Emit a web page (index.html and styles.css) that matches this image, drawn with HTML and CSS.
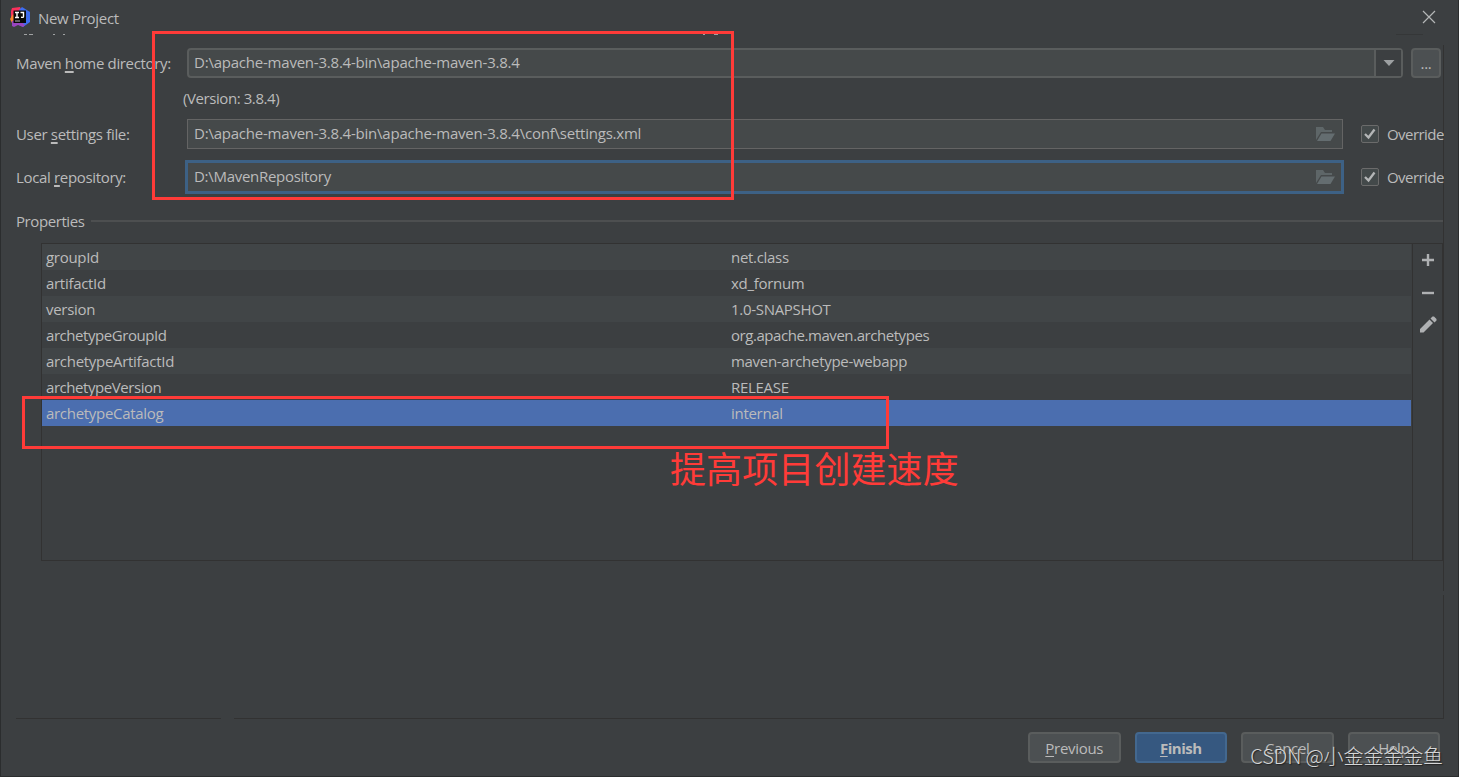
FILE: index.html
```html
<!DOCTYPE html>
<html lang="en">
<head>
  <meta charset="UTF-8">
  <title>New Project</title>
  <link rel="stylesheet" href="styles.css">
</head>
<body>
  <div class="dialog">
    <div class="titlebar">
      <svg class="logo" width="20" height="20" viewBox="0 0 20 20">
        <path d="M2 1l8-1 2 5-8 9-3-2V4z" fill="#f8315c"/>
        <path d="M0 12l3-5 3 6-4 3z" fill="#f9852c"/>
        <path d="M9 3l3-3 8 5v10l-7 5-4-2z" fill="#3d6df0"/>
        <path d="M2 14l6-2 7 6-2 2-5-2-4 2-2-1z" fill="#9a45c0"/>
        <rect x="3.500" y="3.500" width="12.500" height="12.500" fill="#080808"/>
        <path d="M5 5.500h4M7 5.500v5M5 10.500h4M10.500 5.500h3v4q0 1.200-2.500.800" stroke="#fff" stroke-width="1.400" fill="none"/>
        <path d="M5 14h5" stroke="#999" stroke-width="1.200"/>
      </svg>
      <span class="title">New Project</span>
      <svg class="close" width="14" height="14" viewBox="0 0 14 14"><path d="M1 1l12 12M13 1L1 13" stroke="#b4b6b7" stroke-width="1.200"/></svg>
    </div>

    <div class="content">
      <div class="form">
        <div class="row row-home">
          <label>Maven <u>h</u>ome directory:</label>
          <div class="combo">
            <span class="value">D:\apache-maven-3.8.4-bin\apache-maven-3.8.4</span>
            <span class="arrow"><svg width="12" height="8" viewBox="0 0 12 8"><path d="M0.500 1h11L6 7z" fill="#9da0a2"/></svg></span>
          </div>
          <button class="more">...</button>
        </div>
        <div class="version">(Version: 3.8.4)</div>
        <div class="row row-settings">
          <label>User <u>s</u>ettings file:</label>
          <div class="field">
            <span class="value">D:\apache-maven-3.8.4-bin\apache-maven-3.8.4\conf\settings.xml</span>
            <svg class="folder" width="20" height="16" viewBox="0 0 20 16"><path d="M0 1h7l2 3h7v2H5L0 14z" fill="#5e6668"/><path d="M5.500 7.500H19L14.500 15H1z" fill="#646d70"/></svg>
          </div>
          <span class="check"><svg width="18" height="18" viewBox="0 0 18 18"><path d="M4 9l3.500 3.500L13.500 4.500" stroke="#b4b6b7" stroke-width="2.300" fill="none"/></svg></span>
          <span class="override">Override</span>
        </div>
        <div class="row row-repo">
          <label>Local <u>r</u>epository:</label>
          <div class="field focused">
            <span class="value">D:\MavenRepository</span>
            <svg class="folder" width="20" height="16" viewBox="0 0 20 16"><path d="M0 1h7l2 3h7v2H5L0 14z" fill="#5e6668"/><path d="M5.500 7.500H19L14.500 15H1z" fill="#646d70"/></svg>
          </div>
          <span class="check"><svg width="18" height="18" viewBox="0 0 18 18"><path d="M4 9l3.500 3.500L13.500 4.500" stroke="#b4b6b7" stroke-width="2.300" fill="none"/></svg></span>
          <span class="override">Override</span>
        </div>
      </div>

      <div class="section"><span>Properties</span></div>

      <div class="properties">
        <div class="table">
          <div class="prop"><span>groupId</span><span>net.class</span></div>
          <div class="prop"><span>artifactId</span><span>xd_fornum</span></div>
          <div class="prop"><span>version</span><span>1.0-SNAPSHOT</span></div>
          <div class="prop"><span class="tight">archetypeGroupId</span><span class="tight">org.apache.maven.archetypes</span></div>
          <div class="prop"><span>archetypeArtifactId</span><span>maven-archetype-webapp</span></div>
          <div class="prop"><span class="tight">archetypeVersion</span><span>RELEASE</span></div>
          <div class="prop selected"><span>archetypeCatalog</span><span>internal</span></div>
        </div>
        <div class="tools">
          <svg width="18" height="18" viewBox="0 0 18 18"><path d="M9 3v12M3 9h12" stroke="#afb1b3" stroke-width="2.400"/></svg>
          <svg width="18" height="18" viewBox="0 0 18 18"><path d="M3 9h12" stroke="#afb1b3" stroke-width="2.400"/></svg>
          <svg width="18" height="18" viewBox="0 0 18 18"><path d="M1 13L10.500 3.500l3.500 3.500L4.500 16.500H1zM11.500 2.500L13.500 0.500h1.500L17.500 3v1.500l-2 2z" fill="#afb1b3"/></svg>
        </div>
      </div>
    </div>

    <div class="divider"><span></span><span></span></div>
    <div class="buttons">
      <button><u>P</u>revious</button>
      <button class="primary"><u>F</u>inish</button>
      <button>Cancel</button>
      <button>Help</button>
    </div>

    <!-- edges of the row scrolled under the title bar -->
    <svg class="scrolled" width="1443" height="3" viewBox="0 0 1443 3">
      <path d="M24 1.500h3M29 1.500h4M53 1.500h2M63 1.500h2M703 1.500h2M714 1.500h4" stroke="#a0a2a3"/>
      <path d="M1396 1.500h27" stroke="#353738"/>
    </svg>
    <div class="mark mark-paths"></div>
    <div class="mark mark-catalog"></div>
    <div class="note">提高项目创建速度</div>
    <div class="watermark">CSDN @小金金金金鱼</div>
  </div>
</body>
</html>
```

FILE: styles.css
```css
* {
  box-sizing: border-box;
}
body {
  margin: 0;
  background: #3c3f41;
  color: #bbbbbb;
  font: 15px/20px "Open Sans", "Noto Sans CJK SC", sans-serif;
  letter-spacing: -0.3px;
  overflow: hidden;
}
.dialog {
  position: relative;
  display: flex;
  flex-direction: column;
  width: 1459px;
  height: 777px;
  border: 1px solid #2b2d2e;
  border-top: none;
  white-space: nowrap;
}
.titlebar {
  display: flex;
  align-items: center;
  height: 36px;
  padding: 0 22px 2px 9px;
}
.title {
  margin: 2px 0 0 8px;
}
.close {
  margin-left: auto;
}
.content {
  width: 1443px;
  height: 682px;
  padding: 0 1px 0 15px;
  overflow: hidden;
  background: linear-gradient(transparent 9px, #323232 9px, #323232 555px, transparent 555px, transparent 559px, #323232 559px) right top / 1px 100% no-repeat;
}
.form {
  width: 1427px;
}
.row {
  display: flex;
  align-items: center;
}
label {
  width: 169px;
  flex: none;
  letter-spacing: -0.34px;
}
u {
  text-underline-offset: 2px;
}
label u {
  text-decoration-thickness: 2px;
  text-decoration-skip-ink: none;
}
.row-home {
  height: 54px;
}
.row-home label {
  width: 171px;
}
.combo {
  display: flex;
  width: 1216px;
  height: 30px;
  border: 2px solid #5a5d5d;
  border-radius: 4px;
  background: #45494a;
}
.value {
  padding: 2px 0 0 5px;
  letter-spacing: -0.22px;
}
.arrow {
  display: flex;
  align-items: center;
  justify-content: center;
  width: 27px;
  margin-left: auto;
  border-left: 2px solid #5a5d5d;
  background: #3c3f41;
}
button {
  padding: 0;
  border: 2px solid #5a5d5d;
  border-radius: 4px;
  background: #4c5052;
  color: #bbbbbb;
  font: inherit;
  letter-spacing: inherit;
}
.more {
  width: 30px;
  height: 30px;
  margin-left: 8px;
}
.version {
  height: 20px;
  margin-top: -2px;
  padding-left: 167px;
  letter-spacing: -0.42px;
}
.row-settings {
  height: 50px;
  padding-top: 2px;
}
.row-repo {
  height: 37px;
}
.field {
  display: flex;
  flex: none;
  width: 1159px;
  height: 34px;
}
.row-settings .field {
  width: 1156px;
  height: 30px;
  margin: 0 1px 0 2px;
  padding-right: 6px;
  border: 1px solid #646464;
  background: #45494a;
}
.row-settings .value {
  padding-left: 6px;
  padding-top: 3px;
}
.focused {
  padding-right: 5px;
  border: 3px solid #3d6185;
  background: #45494a;
}
.focused .value {
  padding-top: 3px;
  padding-left: 6px;
  letter-spacing: -0.29px;
}
.folder {
  margin: auto 0 auto auto;
}
.check {
  display: flex;
  flex: none;
  width: 18px;
  height: 18px;
  margin: 0 8px 0 17px;
  border: 1px solid #6b6b6b;
  border-radius: 2px;
  background: #43494a;
}
.check svg {
  flex: none;
  margin: -1px;
}
.override {
  letter-spacing: -0.55px;
}
.section {
  display: flex;
  align-items: center;
  height: 48px;
  padding-top: 3px;
  letter-spacing: -0.42px;
}
.section::after {
  content: "";
  flex: 1;
  height: 2px;
  margin-left: 7px;
  background: #4d4f50;
}
.properties {
  display: flex;
  width: 1402px;
  height: 318px;
  margin-left: 25px;
  border: 1px solid #323232;
}
.table {
  flex: 1;
  padding-right: 1px;
}
.prop {
  display: grid;
  grid-template-columns: 685px 1fr;
  height: 26px;
  padding-left: 4px;
  line-height: 27px;
}
.prop:nth-child(odd) {
  background: #414547;
}
.prop.selected {
  background: #4b6eaf;
}
.tight {
  letter-spacing: -0.44px;
}
.tools {
  display: flex;
  flex-direction: column;
  gap: 15px;
  width: 30px;
  padding: 7px 0 0 6px;
  border-left: 1px solid #323232;
}
.tools svg:last-child {
  margin-top: -1px;
}
.divider {
  display: flex;
  gap: 13px;
  width: 1443px;
  padding-left: 15px;
}
.divider span {
  height: 1px;
  width: 205px;
  background: #323232;
}
.divider span:last-child {
  flex: 1;
}
.buttons {
  display: flex;
  justify-content: flex-end;
  gap: 14px;
  padding: 13px 18px 0 0;
}
.buttons button {
  width: 92.5px;
  height: 31px;
}
.buttons .primary {
  border-color: #43688f;
  background: #365880;
  font-weight: bold;
  letter-spacing: -0.5px;
}
.scrolled {
  position: absolute;
  left: -1px;
  top: 33px;
}
/* red annotations over the dialog */
.mark {
  position: absolute;
  border: 3px solid #ff3b38;
}
.mark-paths {
  left: 151px;
  top: 31px;
  width: 582px;
  height: 169px;
}
.mark-catalog {
  left: 21px;
  top: 396px;
  width: 867px;
  height: 53px;
}
.note {
  position: absolute;
  left: 669px;
  top: 441px;
  color: #ff3b38;
  font: 36px/52px "Noto Sans CJK SC", sans-serif;
  letter-spacing: 0.1px;
}
.watermark {
  position: absolute;
  right: 15px;
  top: 743px;
  color: #d5d6d7;
  font: 300 20px/26px "Noto Sans CJK SC", sans-serif;
  letter-spacing: -0.1px;
  text-shadow: 1px 1px 1px #222;
}
```
